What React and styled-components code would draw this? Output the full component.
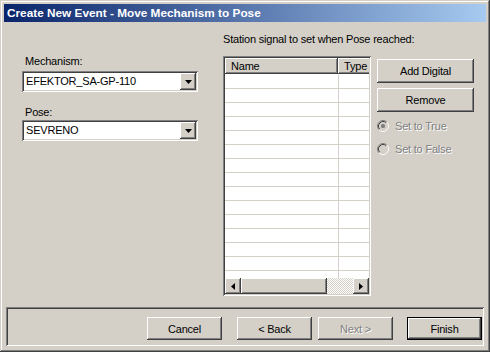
import React from "react";
import styled, {createGlobalStyle, css} from "styled-components";

const GlobalStyle = createGlobalStyle`
  body {
    margin: 0;
    background: #d4d0c8;
    font-family: "Liberation Sans", Arial, sans-serif;
    font-size: 11px;
    letter-spacing: -0.2px;
  }
`;

const raised = css`
  box-shadow: inset -1px -1px #404040, inset 1px 1px #fff,
    inset -2px -2px #808080, inset 2px 2px #d4d0c8;
`;

const sunken = css`
  box-shadow: inset 1px 1px #808080, inset -1px -1px #fff,
    inset 2px 2px #404040, inset -2px -2px #d4d0c8;
`;

const Window = styled.div`
  width: 490px;
  height: 352px;
  box-sizing: border-box;
  padding: 4px;
  background: #d4d0c8;
  display: flex;
  flex-direction: column;
  box-shadow: inset -1px -1px #404040, inset 1px 1px #d4d0c8,
    inset -2px -2px #808080, inset 2px 2px #fff;
`;

const TitleBar = styled.div`
  height: 18px;
  line-height: 18px;
  padding-left: 3px;
  background: linear-gradient(to right, #0a246a, #a6caf0);
  color: #fff;
  font-weight: bold;
  font-size: 11.8px;
  letter-spacing: 0;
  white-space: nowrap;
`;

const Body = styled.div`
  height: 285px;
  display: flex;
  padding: 11px 0 0 18px;
  box-sizing: border-box;
`;

const LeftCol = styled.div`
  width: 176px;
  flex-shrink: 0;
  padding-top: 22px;
  display: flex;
  flex-direction: column;
`;

const Label = styled.div`
  height: 13px;
  line-height: 13px;
  padding-left: ${(p) => (p.$flush ? 0 : 3)}px;
  margin-top: ${(p) => p.$top || 0}px;
  white-space: nowrap;
`;

const Combo = styled.div`
  height: 21px;
  margin-top: ${(p) => p.$top || 0}px;
  background: #fff;
  ${sunken};
  display: flex;
  align-items: center;
  padding: 2px;
  box-sizing: border-box;
`;

const ComboText = styled.div`
  flex: 1;
  padding-left: 2px;
  line-height: 17px;
`;

const DropButton = styled.div`
  width: 16px;
  height: 17px;
  background: #d4d0c8;
  ${raised};
  display: flex;
  align-items: center;
  justify-content: center;
`;

const MidCol = styled.div`
  width: 148px;
  flex-shrink: 0;
  margin-left: 25px;
  display: flex;
  flex-direction: column;
`;

const ListView = styled.div`
  width: 148px;
  height: 240px;
  margin-top: 10px;
  background: #fff;
  ${sunken};
  padding: 2px;
  box-sizing: border-box;
  display: flex;
  flex-direction: column;
  overflow: hidden;
`;

const HeaderRow = styled.div`
  display: flex;
  height: 16px;
  flex-shrink: 0;
  overflow: hidden;
`;

const HeaderCell = styled.div`
  width: ${(p) => p.$w}px;
  flex-shrink: 0;
  background: #d4d0c8;
  ${raised};
  line-height: 16px;
  padding-left: 6px;
  box-sizing: border-box;
`;

const Rows = styled.div`
  flex: 1;
  overflow: hidden;
  padding-top: 1px;
`;

const Row = styled.div`
  display: flex;
  height: 14px;
  box-sizing: border-box;
  border-bottom: 1px solid #d4d0c8;
`;

const Cell = styled.div`
  width: 113px;
  border-right: 1px solid #d4d0c8;
`;

const HScroll = styled.div`
  height: 16px;
  display: flex;
  flex-shrink: 0;
`;

const ScrollButton = styled.div`
  width: 16px;
  height: 16px;
  background: #d4d0c8;
  ${raised};
  display: flex;
  align-items: center;
  justify-content: center;
`;

const Thumb = styled.div`
  width: 86px;
  background: #d4d0c8;
  ${raised};
`;

const Track = styled.div`
  flex: 1;
  background: repeating-conic-gradient(#d4d0c8 0 25%, #fff 0 50%) 0 0 / 2px 2px;
`;

const RightCol = styled.div`
  margin-left: 6px;
  padding-top: 26px;
  width: 97px;
  flex-shrink: 0;
  display: flex;
  flex-direction: column;
`;

const Button = styled.button`
  width: ${(p) => p.$w || 97}px;
  height: ${(p) => p.$h || 24}px;
  margin: ${(p) => p.$m || "0"};
  padding: 0;
  border: ${(p) => (p.$default ? "1px solid #000" : "none")};
  background: #d4d0c8;
  ${raised};
  font-family: "Liberation Sans", Arial, sans-serif;
  font-size: 11px;
  letter-spacing: -0.2px;
  color: ${(p) => (p.disabled ? "#808080" : "#000")};
  text-shadow: ${(p) => (p.disabled ? "1px 1px #fff" : "none")};
  box-sizing: border-box;
`;

const RadioRow = styled.div`
  display: flex;
  align-items: center;
  height: 13px;
  margin-top: ${(p) => p.$top}px;
  color: #808080;
  text-shadow: 1px 1px #fff;
  white-space: nowrap;
  svg {
    margin-right: 6px;
    flex-shrink: 0;
  }
`;

const Footer = styled.div`
  height: 39px;
  margin: 0 2px 2px;
  ${sunken};
  display: flex;
  justify-content: flex-end;
  align-items: flex-start;
  padding: 10px 2px 0 0;
  box-sizing: border-box;
`;

const Arrow = ({dir}) => {
  const pts = {
    down: "0,0 7,0 3.5,4",
    left: "4,0 4,7 0,3.5",
    right: "0,0 0,7 4,3.5",
  }[dir];
  const w = dir === "down" ? 7 : 4;
  const h = dir === "down" ? 4 : 7;
  return (
    <svg width={w} height={h} viewBox={`0 0 ${w} ${h}`}>
      <polygon points={pts} fill="#000" />
    </svg>
  );
};

const Radio = ({checked}) => (
  <svg width="12" height="12" viewBox="0 0 12 12">
    <circle cx="6" cy="6" r="4.5" fill="#d4d0c8" />
    <path d="M2.11 9.89 A5.5 5.5 0 0 1 9.89 2.11" stroke="#808080" fill="none" />
    <path d="M9.89 2.11 A5.5 5.5 0 0 1 2.11 9.89" stroke="#fff" fill="none" />
    <path d="M2.82 9.18 A4.5 4.5 0 0 1 9.18 2.82" stroke="#404040" fill="none" />
    <path d="M9.18 2.82 A4.5 4.5 0 0 1 2.82 9.18" stroke="#d4d0c8" fill="none" />
    {checked && <rect x="4" y="4" width="4" height="4" rx="1.5" fill="#808080" />}
  </svg>
);

const App = () => {
  const rows = Array.from({length: 15});
  return (
    <Window>
      <GlobalStyle />
      <TitleBar>Create New Event - Move Mechanism to Pose</TitleBar>
      <Body>
        <LeftCol>
          <Label>Mechanism:</Label>
          <Combo $top={3}>
            <ComboText>EFEKTOR_SA-GP-110</ComboText>
            <DropButton><Arrow dir="down" /></DropButton>
          </Combo>
          <Label $top={14}>Pose:</Label>
          <Combo $top={1}>
            <ComboText>SEVRENO</ComboText>
            <DropButton><Arrow dir="down" /></DropButton>
          </Combo>
        </LeftCol>
        <MidCol>
          <Label $flush>Station signal to set when Pose reached:</Label>
          <ListView>
            <HeaderRow>
              <HeaderCell $w={113}>Name</HeaderCell>
              <HeaderCell $w={60}>Type</HeaderCell>
            </HeaderRow>
            <Rows>
              {rows.map((_, i) => (
                <Row key={`row-${i}`}>
                  <Cell />
                </Row>
              ))}
            </Rows>
            <HScroll>
              <ScrollButton><Arrow dir="left" /></ScrollButton>
              <Thumb />
              <Track />
              <ScrollButton><Arrow dir="right" /></ScrollButton>
            </HScroll>
          </ListView>
        </MidCol>
        <RightCol>
          <Button>Add Digital</Button>
          <Button $m="5px 0 0">Remove</Button>
          <RadioRow $top={7}><Radio checked />Set to True</RadioRow>
          <RadioRow $top={10}><Radio />Set to False</RadioRow>
        </RightCol>
      </Body>
      <Footer>
        <Button $w={75} $h={23}>Cancel</Button>
        <Button $w={75} $h={23} $m="0 0 0 15px">&lt; Back</Button>
        <Button $w={75} $h={23} $m="0 0 0 6px" disabled>Next &gt;</Button>
        <Button $w={75} $h={23} $m="0 0 0 14px" $default>Finish</Button>
      </Footer>
    </Window>
  );
};

export default App;
